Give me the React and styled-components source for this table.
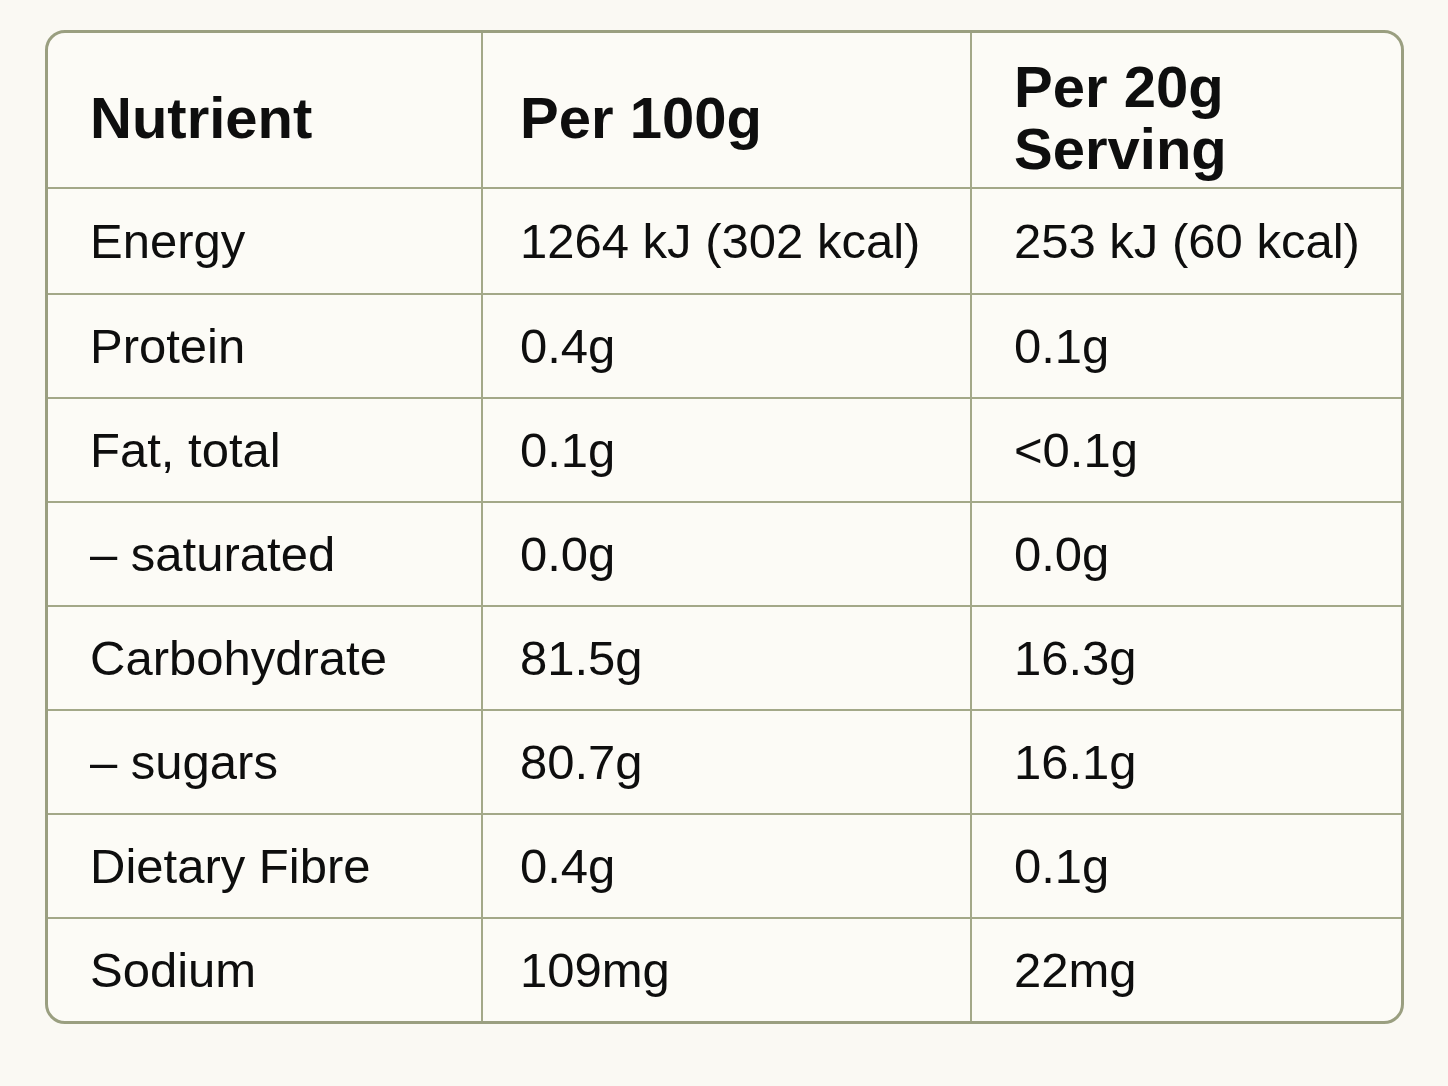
import React from "react";
import styled, { createGlobalStyle } from "styled-components";

const GlobalStyle = createGlobalStyle`
    html, body {
        margin: 0;
        padding: 0;
        background: #faf9f3;
    }
    body {
        font-family: "Liberation Sans", Arial, sans-serif;
        color: #0e0e0e;
    }
`;

const Page = styled.div`
    padding: 30px 0 0 45px;
    min-height: 1086px;
    box-sizing: border-box;
`;

const Card = styled.div`
    width: 1359px;
    box-sizing: border-box;
    border: 3px solid #9a9f80;
    border-radius: 20px;
    background: #fcfbf6;
    overflow: hidden;
`;

const Grid = styled.div`
    display: grid;
    grid-template-columns: 433px 489px 1fr;
`;

const Cell = styled.div`
    display: flex;
    align-items: center;
    box-sizing: border-box;
    padding-left: ${(p) => (p.$col === 1 ? "37px" : "42px")};
    padding-right: 16px;
    border-left: ${(p) => (p.$col === 0 ? "none" : "2px solid #a3a888")};
    border-top: ${(p) => (p.$top ? "none" : "2px solid #a3a888")};
    height: ${(p) => (p.$head ? "154px" : p.$tall ? "106px" : "104px")};
`;

const HeadText = styled.span`
    font-size: 58px;
    font-weight: 700;
    line-height: 62px;
    padding-top: 16px;
`;

const BodyText = styled.span`
    font-size: 49px;
    font-weight: 400;
    line-height: 1.15;
`;

const headers = ["Nutrient", "Per 100g", "Per 20g Serving"];

const rows = [
    ["Energy", "1264 kJ (302 kcal)", "253 kJ (60 kcal)"],
    ["Protein", "0.4g", "0.1g"],
    ["Fat, total", "0.1g", "<0.1g"],
    ["– saturated", "0.0g", "0.0g"],
    ["Carbohydrate", "81.5g", "16.3g"],
    ["– sugars", "80.7g", "16.1g"],
    ["Dietary Fibre", "0.4g", "0.1g"],
    ["Sodium", "109mg", "22mg"],
];

const App = () => {
    return (
        <>
            <GlobalStyle />
            <Page>
                <Card>
                    <Grid>
                        {headers.map((h, i) => (
                            <Cell key={h} $head $top $col={i}>
                                <HeadText>{h}</HeadText>
                            </Cell>
                        ))}
                        {rows.map((row, r) =>
                            row.map((val, i) => (
                                <Cell key={row[0] + i} $col={i} $tall={r === 0}>
                                    <BodyText>{val}</BodyText>
                                </Cell>
                            ))
                        )}
                    </Grid>
                </Card>
            </Page>
        </>
    );
};

export default App;
